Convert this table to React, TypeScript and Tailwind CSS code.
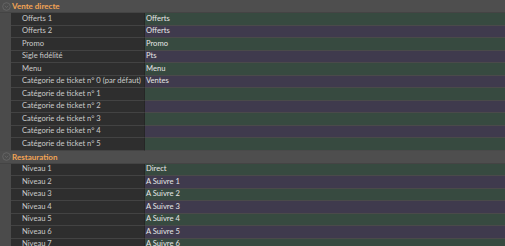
import React from 'react';

type Row = { label: string; value: string };

const sections: { title: string; rows: Row[] }[] = [
  {
    title: 'Vente directe',
    rows: [
      { label: 'Offerts 1', value: 'Offerts' },
      { label: 'Offerts 2', value: 'Offerts' },
      { label: 'Promo', value: 'Promo' },
      { label: 'Sigle fidélité', value: 'Pts' },
      { label: 'Menu', value: 'Menu' },
      { label: 'Catégorie de ticket n° 0 (par défaut)', value: 'Ventes' },
      { label: 'Catégorie de ticket n° 1', value: '' },
      { label: 'Catégorie de ticket n° 2', value: '' },
      { label: 'Catégorie de ticket n° 3', value: '' },
      { label: 'Catégorie de ticket n° 4', value: '' },
      { label: 'Catégorie de ticket n° 5', value: '' },
    ],
  },
  {
    title: 'Restauration',
    rows: [
      { label: 'Niveau 1', value: 'Direct' },
      { label: 'Niveau 2', value: 'A Suivre 1' },
      { label: 'Niveau 3', value: 'A Suivre 2' },
      { label: 'Niveau 4', value: 'A Suivre 3' },
      { label: 'Niveau 5', value: 'A Suivre 4' },
      { label: 'Niveau 6', value: 'A Suivre 5' },
      { label: 'Niveau 7', value: 'A Suivre 6' },
    ],
  },
];

const CollapseIcon = () => (
  <svg width="9" height="9" viewBox="0 0 9 9" className="shrink-0">
    <circle cx="4.5" cy="4.5" r="3.8" fill="none" stroke="#6a6a6a" strokeWidth="0.8" />
    <path d="M2.8 3.9 L4.5 5.5 L6.2 3.9" fill="none" stroke="#6a6a6a" strokeWidth="0.8" />
  </svg>
);

export default function App() {
  return (
    <div
      className="w-[505px] h-[246px] overflow-hidden bg-[#4b4b4b] text-[7.6px] leading-none"
      style={{ fontFamily: 'Lato, "Noto Sans", sans-serif' }}
    >
      {sections.map((s) => (
        <div key={s.title}>
          {/* Section header */}
          <div className="h-[13px] flex items-center gap-[1px] pl-[2px] bg-[#4e4e4e] border-b border-[#444]">
            <CollapseIcon />
            <span className="font-bold text-[8px] text-[#f2a455]">{s.title}</span>
          </div>
          {s.rows.map((r, i) => (
            <div key={r.label} className="h-[12.5px] flex pl-[11px]">
              <div className="w-[133px] shrink-0 bg-[#2e2e2e] border-b border-[#434343] flex items-center pl-[11px] text-[#cacaca] whitespace-nowrap">
                {r.label}
              </div>
              <div
                className={
                  'flex-1 border-l border-[#262626] border-b border-b-[#4a4a4a] flex items-center pl-[1px] text-[#e6e6e6] ' +
                  (i % 2 === 0 ? 'bg-[#374a40]' : 'bg-[#3f3a4d]')
                }
              >
                {r.value}
              </div>
            </div>
          ))}
        </div>
      ))}
    </div>
  );
}
